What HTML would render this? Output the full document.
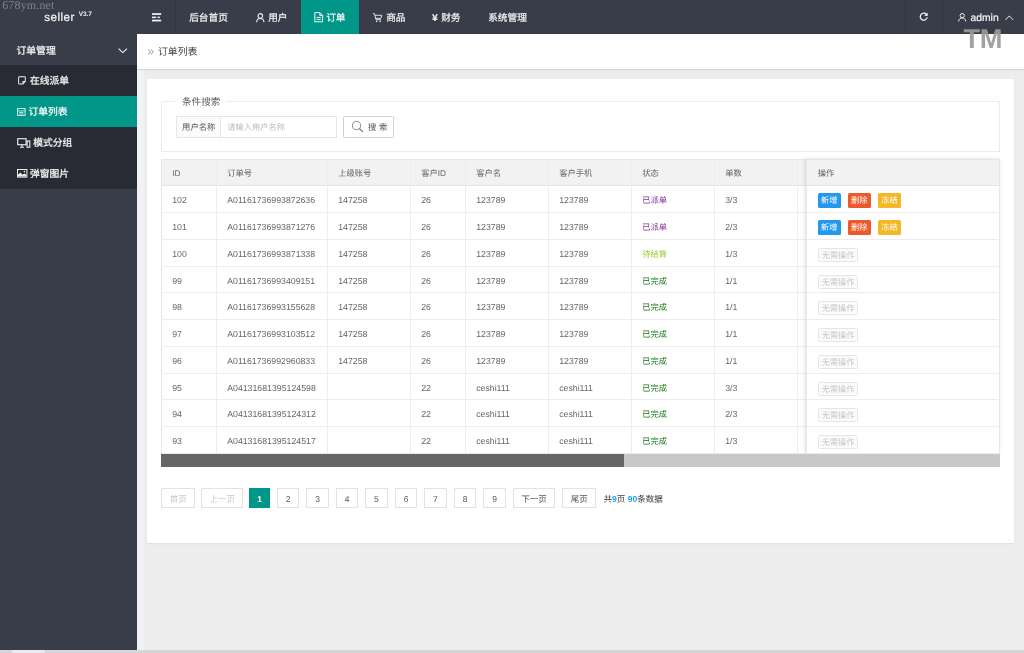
<!DOCTYPE html>
<html lang="zh-CN">
<head>
<meta charset="utf-8">
<title>seller</title>
<style>
*{box-sizing:border-box;margin:0;padding:0}
html,body{width:1024px;height:653px;overflow:hidden}
body{will-change:transform;text-rendering:geometricPrecision}
body{position:relative;background:#ededed;font-family:"Liberation Sans",sans-serif;font-size:9.6px;color:#666}
.abs{position:absolute}
.nw{white-space:nowrap;overflow:visible}
svg{position:absolute;overflow:visible}
/* header */
#hd{left:0;top:0;width:1024px;height:34px;background:#393d49}
#hd .t{-webkit-text-stroke:0.22px #f1f1f2;position:absolute;top:1.5px;height:34px;line-height:34.5px;color:#f1f1f2;font-size:9.7px;white-space:nowrap}
#hd .dv{position:absolute;top:0;width:1px;height:34px;background:#31343f}
/* side */
#sd{left:0;top:34px;width:137px;height:619px;background:#393d49}
#sd .it{-webkit-text-stroke:0.25px #f4f4f5;position:absolute;left:0;width:137px;height:31px;line-height:35.2px;color:#f4f4f5;font-size:9.8px;white-space:nowrap}
#sub .it{line-height:34px;font-size:9.75px}
#sub{left:0;top:31px;width:137px;height:123.5px;background:#282b33}
/* crumbs */
#bc{left:137px;top:34px;width:887px;height:34.5px;background:#fff;box-shadow:0 1px 1.5px rgba(0,0,0,.12)}
/* card */
#cd{left:147px;top:79px;width:867px;height:464px;background:#fff;box-shadow:0 1px 1.5px rgba(0,0,0,.07)}

.th{font-size:8.3px;color:#666}
.td{font-size:8.75px;color:#666;line-height:28.9px}
.sp{color:#7d3596;font-size:8.3px}
.sy{color:#9acd32;font-size:8.3px}
.sg{color:#167516;font-size:8.3px}
.bt{height:15.2px;width:22.8px;border-radius:1.5px;color:#fff;font-size:8.2px;line-height:15.4px;text-align:center}
.bd{height:14.2px;width:40.6px;border-radius:1.5px;border:1px solid #e6e6e6;background:#fbfbfb;color:#c6c6c6;font-size:8.2px;line-height:13.6px;text-align:center}
.pg{top:488.4px;height:20px;border:1px solid #e2e2e2;background:#fff;color:#555;font-size:8.5px;line-height:20.2px;text-align:center}
.pg.dis{color:#c8c8c8}
.pg.cur{background:#009688;border-color:#009688;color:#fff;font-weight:bold}
.bl{color:#1e9fff}
</style>
</head>
<body>
<!-- header -->
<div id="hd" class="abs">
  <div class="dv" style="left:175px"></div>
  <div class="dv" style="left:905px"></div>
  <div class="dv" style="left:942px"></div>
  <div class="abs" style="left:301px;top:0;width:58.3px;height:34px;background:#009688"></div>
  <div class="t" style="left:189.2px">后台首页</div>
  <div class="t" style="left:268.2px">用户</div>
  <div class="t" style="left:326.2px;color:#fff">订单</div>
  <div class="t" style="left:386.2px">商品</div>
  <div class="t" style="left:432.3px;font-weight:bold;font-size:9.6px">¥</div>
  <div class="t" style="left:441.2px">财务</div>
  <div class="t" style="left:488.2px">系统管理</div>
  <div class="t" style="left:970.6px;font-size:10.3px">admin</div>
</div>
<!-- sidebar -->
<div id="sd" class="abs">
  <div class="it" style="top:0;left:0;padding-left:16.5px">订单管理</div>
  <div id="sub" class="abs">
    <div class="it" style="top:0;padding-left:30px">在线派单</div>
    <div class="it" style="top:31px;background:#009688;color:#fff;padding-left:28.5px">订单列表</div>
    <div class="it" style="top:62px;padding-left:33.3px">模式分组</div>
    <div class="it" style="top:93px;padding-left:30px">弹窗图片</div>
  </div>
</div>
<!-- logo -->
<div class="abs nw" style="left:44.3px;top:10.8px;font-size:11.7px;line-height:14px;color:#f5f5f5;letter-spacing:0.42px;-webkit-text-stroke:0.2px #f5f5f5">seller</div>
<div class="abs nw" style="left:78.8px;top:10.8px;font-size:6.5px;line-height:8px;font-weight:bold;color:#f0f0f0;letter-spacing:-0.1px">V3.7</div>
<div class="abs nw" style="left:2.2px;top:-1.2px;font-family:'Liberation Serif',serif;font-size:12px;line-height:13px;color:#80828b;letter-spacing:0.15px">678ym.net</div>
<div class="abs" style="left:137px;top:69px;width:7px;height:581px;background:#f2f2f4"></div>
<!-- breadcrumb -->
<div id="bc" class="abs">
  <div class="abs nw" style="left:10.5px;top:0;line-height:35.6px;font-size:12px;color:#a3a3a3">»</div>
  <div class="abs nw" style="left:21px;top:0;line-height:37.4px;font-size:9.85px;color:#444">订单列表</div>
</div>
<div class="abs nw" style="left:963.5px;top:22.8px;font-size:27.3px;line-height:31px;font-weight:bold;color:#9b9b9b;opacity:.92;letter-spacing:-0.5px">TM</div>
<!--ICONS-->
<!-- hamburger -->
<svg style="left:151.8px;top:12.6px" width="10" height="9" viewBox="0 0 10 9"><g fill="#f4f4f4"><rect x="0" y="0.2" width="9.2" height="1.7"/><rect x="0" y="3.6" width="4.2" height="1.5"/><rect x="5.6" y="3.6" width="2.2" height="1.5"/><rect x="0" y="6.7" width="9.2" height="1.7"/></g></svg>
<!-- user (nav) -->
<svg style="left:255.8px;top:12.6px" width="9" height="10" viewBox="0 0 9 10"><g fill="none" stroke="#f1f1f1" stroke-width="1.05"><circle cx="4.3" cy="2.9" r="2.3"/><path d="M0.6 9.2C0.8 6.6 2.4 5.5 4.3 5.5S7.8 6.6 8 9.2"/></g></svg>
<!-- order doc -->
<svg style="left:313.8px;top:11.8px" width="10" height="11" viewBox="0 0 10 11"><g fill="none" stroke="#fff" stroke-width="0.95" stroke-linejoin="round"><path d="M0.8 0.6H5.8L8.6 3.4V9.8H0.8Z"/><path d="M5.8 0.6V3.4H8.6"/><path d="M2.6 5.4H6.8M2.6 7.4H6.8" stroke-width="0.9"/></g></svg>
<!-- cart -->
<svg style="left:372.7px;top:12.5px" width="10.2" height="9.6" viewBox="0 0 11 10" preserveAspectRatio="none"><g fill="none" stroke="#f1f1f1" stroke-width="0.95" stroke-linejoin="round" stroke-linecap="round"><path d="M0.4 0.6L1.6 0.8L3.3 7H8.2"/><path d="M2.3 2.4H9.6L8.5 5.6H3"/></g><circle cx="3.9" cy="8.7" r="0.85" fill="#f1f1f1"/><circle cx="7.7" cy="8.7" r="0.85" fill="#f1f1f1"/></svg>
<!-- refresh -->
<svg style="left:919.3px;top:12.3px" width="9.4" height="9.4" viewBox="0 0 10 10"><path d="M7.9 2.6A3.7 3.7 0 1 0 8.7 5.6" fill="none" stroke="#f4f4f4" stroke-width="1.35"/><path d="M5.6 3.9L9.2 0.5V4.2Z" fill="#f4f4f4"/></svg>
<!-- user (right) -->
<svg style="left:958px;top:12.9px" width="9" height="9" viewBox="0 0 9 9"><g fill="none" stroke="#f1f1f1" stroke-width="1"><circle cx="4.2" cy="2.6" r="2.1"/><path d="M0.6 8.4C0.8 6 2.4 5 4.2 5S7.6 6 7.8 8.4"/></g></svg>
<!-- caret up -->
<svg style="left:1004.8px;top:14.6px" width="9" height="6" viewBox="0 0 9 6"><path d="M0.5 4.9L4.3 0.9L8.1 4.9" fill="none" stroke="#f1f1f1" stroke-width="1"/></svg>
<!-- chevron down -->
<svg style="left:117.5px;top:48px" width="10" height="6" viewBox="0 0 10 6"><path d="M0.6 0.6L4.8 4.6L9 0.6" fill="none" stroke="#f4f4f4" stroke-width="1.05"/></svg>
<!-- note -->
<svg style="left:17.7px;top:76.4px" width="8.3" height="8.7" viewBox="0 0 9 9" preserveAspectRatio="none"><path d="M5.4 8.3H1.6Q0.7 8.3 0.7 7.4V1.6Q0.7 0.7 1.6 0.7H7Q7.9 0.7 7.9 1.6V5.6L5.4 8.3V5.6H7.9" fill="none" stroke="#f1f1f1" stroke-width="1.05" stroke-linejoin="round"/></svg>
<!-- list -->
<svg style="left:16.8px;top:107.8px" width="8.8" height="8.2" viewBox="0 0 9 9" preserveAspectRatio="none"><g fill="none" stroke="#eafffb" stroke-width="0.9"><rect x="0.6" y="0.6" width="7.7" height="7.5"/><path d="M0.6 3.2H8.3M2.2 5H6.6M2.2 6.6H6.6" stroke-width="0.8"/></g></svg>
<!-- devices -->
<svg style="left:16.8px;top:137.6px" width="14" height="10" viewBox="0 0 14 10"><g fill="none" stroke="#f1f1f1" stroke-width="1.1"><rect x="0.7" y="0.7" width="8.4" height="6"/><path d="M3 9.2H7M5 6.8V9.2" /><rect x="10.1" y="3" width="2.7" height="6.2" fill="#282b33"/></g></svg>
<!-- image -->
<svg style="left:16.9px;top:169.4px" width="11" height="9" viewBox="0 0 11 9"><rect x="0.5" y="0.5" width="9.4" height="7.6" fill="none" stroke="#f1f1f1" stroke-width="1"/><path d="M1 7.6V5.8L3.4 3.6L5.6 5.8L7.4 4.6L9.4 6V7.6Z" fill="#f1f1f1"/><circle cx="7.4" cy="2.6" r="0.8" fill="#f1f1f1"/></svg>
<!--/ICONS-->
<!-- card -->
<div id="cd" class="abs"></div>
<!--CONTENT-->
<div class="abs" style="left:161px;top:101px;width:839px;height:51px;border:1px solid #ececec"></div>
<div class="abs nw" style="left:176px;top:94px;width:50px;height:14px;background:#fff;padding-left:6px;line-height:17.4px;font-size:9.6px;color:#5c5c5c">条件搜索</div>
<div class="abs nw" style="left:175.5px;top:116.3px;width:45.5px;height:21.4px;border:1px solid #e6e6e6;background:#fbfbfb;line-height:21.6px;font-size:8.3px;color:#555;padding-left:5.6px">用户名称</div>
<div class="abs nw" style="left:220px;top:116.3px;width:116.5px;height:21.4px;border:1px solid #e6e6e6;background:#fff;line-height:22.2px;font-size:8.25px;color:#bdbdbd;padding-left:6.2px">请输入用户名称</div>
<div class="abs nw" style="left:343px;top:116.3px;width:51px;height:21.4px;border:1px solid #d0d0d0;border-radius:1.5px;background:#fff;line-height:21.6px;font-size:8.3px;color:#555;padding-left:24px;letter-spacing:0.2px">搜 索</div>
<svg style="left:351.5px;top:121px" width="12" height="12" viewBox="0 0 12 12"><circle cx="4.5" cy="4.6" r="4.1" fill="none" stroke="#777" stroke-width="0.85"/><path d="M7.4 7.4L10.6 10.6" stroke="#777" stroke-width="1.2" stroke-linecap="round"/></svg>
<div class="abs" style="left:161px;top:159px;width:839.0px;height:295px;background:#fff;border:1px solid #e6e6e6;border-bottom:none"></div>
<div class="abs" style="left:161px;top:159px;width:839.0px;height:27px;background:#f2f2f2;border:1px solid #e6e6e6"></div>
<div class="abs" style="left:161px;top:212px;width:839.0px;height:1px;background:#ededed"></div>
<div class="abs" style="left:161px;top:239px;width:839.0px;height:1px;background:#ededed"></div>
<div class="abs" style="left:161px;top:266px;width:839.0px;height:1px;background:#ededed"></div>
<div class="abs" style="left:161px;top:292px;width:839.0px;height:1px;background:#ededed"></div>
<div class="abs" style="left:161px;top:319px;width:839.0px;height:1px;background:#ededed"></div>
<div class="abs" style="left:161px;top:346px;width:839.0px;height:1px;background:#ededed"></div>
<div class="abs" style="left:161px;top:373px;width:839.0px;height:1px;background:#ededed"></div>
<div class="abs" style="left:161px;top:399px;width:839.0px;height:1px;background:#ededed"></div>
<div class="abs" style="left:161px;top:426px;width:839.0px;height:1px;background:#ededed"></div>
<div class="abs" style="left:161px;top:453px;width:839.0px;height:1px;background:#ededed"></div>
<div class="abs" style="left:216px;top:159px;width:1px;height:295px;background:#ededed"></div>
<div class="abs" style="left:327px;top:159px;width:1px;height:295px;background:#ededed"></div>
<div class="abs" style="left:410px;top:159px;width:1px;height:295px;background:#ededed"></div>
<div class="abs" style="left:465px;top:159px;width:1px;height:295px;background:#ededed"></div>
<div class="abs" style="left:548px;top:159px;width:1px;height:295px;background:#ededed"></div>
<div class="abs" style="left:631px;top:159px;width:1px;height:295px;background:#ededed"></div>
<div class="abs" style="left:714px;top:159px;width:1px;height:295px;background:#ededed"></div>
<div class="abs" style="left:797px;top:159px;width:1px;height:295px;background:#ededed"></div>
<div class="abs nw th" style="left:172.2px;top:159px;line-height:28px">ID</div>
<div class="abs nw th" style="left:227.2px;top:159px;line-height:28px">订单号</div>
<div class="abs nw th" style="left:338.2px;top:159px;line-height:28px">上级账号</div>
<div class="abs nw th" style="left:421.2px;top:159px;line-height:28px">客户ID</div>
<div class="abs nw th" style="left:476.2px;top:159px;line-height:28px">客户名</div>
<div class="abs nw th" style="left:559.2px;top:159px;line-height:28px">客户手机</div>
<div class="abs nw th" style="left:642.2px;top:159px;line-height:28px">状态</div>
<div class="abs nw th" style="left:725.2px;top:159px;line-height:28px">单数</div>
<div class="abs nw td" style="left:172.2px;top:186.00px">102</div>
<div class="abs nw td" style="left:227.2px;top:186.00px">A01161736993872636</div>
<div class="abs nw td" style="left:338.2px;top:186.00px">147258</div>
<div class="abs nw td" style="left:421.2px;top:186.00px">26</div>
<div class="abs nw td" style="left:476.2px;top:186.00px">123789</div>
<div class="abs nw td" style="left:559.2px;top:186.00px">123789</div>
<div class="abs nw td sp" style="left:642.2px;top:186.00px">已派单</div>
<div class="abs nw td" style="left:725.2px;top:186.00px">3/3</div>
<div class="abs nw td" style="left:172.2px;top:213.00px">101</div>
<div class="abs nw td" style="left:227.2px;top:213.00px">A01161736993871276</div>
<div class="abs nw td" style="left:338.2px;top:213.00px">147258</div>
<div class="abs nw td" style="left:421.2px;top:213.00px">26</div>
<div class="abs nw td" style="left:476.2px;top:213.00px">123789</div>
<div class="abs nw td" style="left:559.2px;top:213.00px">123789</div>
<div class="abs nw td sp" style="left:642.2px;top:213.00px">已派单</div>
<div class="abs nw td" style="left:725.2px;top:213.00px">2/3</div>
<div class="abs nw td" style="left:172.2px;top:240.00px">100</div>
<div class="abs nw td" style="left:227.2px;top:240.00px">A01161736993871338</div>
<div class="abs nw td" style="left:338.2px;top:240.00px">147258</div>
<div class="abs nw td" style="left:421.2px;top:240.00px">26</div>
<div class="abs nw td" style="left:476.2px;top:240.00px">123789</div>
<div class="abs nw td" style="left:559.2px;top:240.00px">123789</div>
<div class="abs nw td sy" style="left:642.2px;top:240.00px">待结算</div>
<div class="abs nw td" style="left:725.2px;top:240.00px">1/3</div>
<div class="abs nw td" style="left:172.2px;top:267.00px">99</div>
<div class="abs nw td" style="left:227.2px;top:267.00px">A01161736993409151</div>
<div class="abs nw td" style="left:338.2px;top:267.00px">147258</div>
<div class="abs nw td" style="left:421.2px;top:267.00px">26</div>
<div class="abs nw td" style="left:476.2px;top:267.00px">123789</div>
<div class="abs nw td" style="left:559.2px;top:267.00px">123789</div>
<div class="abs nw td sg" style="left:642.2px;top:267.00px">已完成</div>
<div class="abs nw td" style="left:725.2px;top:267.00px">1/1</div>
<div class="abs nw td" style="left:172.2px;top:293.00px">98</div>
<div class="abs nw td" style="left:227.2px;top:293.00px">A01161736993155628</div>
<div class="abs nw td" style="left:338.2px;top:293.00px">147258</div>
<div class="abs nw td" style="left:421.2px;top:293.00px">26</div>
<div class="abs nw td" style="left:476.2px;top:293.00px">123789</div>
<div class="abs nw td" style="left:559.2px;top:293.00px">123789</div>
<div class="abs nw td sg" style="left:642.2px;top:293.00px">已完成</div>
<div class="abs nw td" style="left:725.2px;top:293.00px">1/1</div>
<div class="abs nw td" style="left:172.2px;top:320.00px">97</div>
<div class="abs nw td" style="left:227.2px;top:320.00px">A01161736993103512</div>
<div class="abs nw td" style="left:338.2px;top:320.00px">147258</div>
<div class="abs nw td" style="left:421.2px;top:320.00px">26</div>
<div class="abs nw td" style="left:476.2px;top:320.00px">123789</div>
<div class="abs nw td" style="left:559.2px;top:320.00px">123789</div>
<div class="abs nw td sg" style="left:642.2px;top:320.00px">已完成</div>
<div class="abs nw td" style="left:725.2px;top:320.00px">1/1</div>
<div class="abs nw td" style="left:172.2px;top:347.00px">96</div>
<div class="abs nw td" style="left:227.2px;top:347.00px">A01161736992960833</div>
<div class="abs nw td" style="left:338.2px;top:347.00px">147258</div>
<div class="abs nw td" style="left:421.2px;top:347.00px">26</div>
<div class="abs nw td" style="left:476.2px;top:347.00px">123789</div>
<div class="abs nw td" style="left:559.2px;top:347.00px">123789</div>
<div class="abs nw td sg" style="left:642.2px;top:347.00px">已完成</div>
<div class="abs nw td" style="left:725.2px;top:347.00px">1/1</div>
<div class="abs nw td" style="left:172.2px;top:374.00px">95</div>
<div class="abs nw td" style="left:227.2px;top:374.00px">A04131681395124598</div>
<div class="abs nw td" style="left:421.2px;top:374.00px">22</div>
<div class="abs nw td" style="left:476.2px;top:374.00px">ceshi111</div>
<div class="abs nw td" style="left:559.2px;top:374.00px">ceshi111</div>
<div class="abs nw td sg" style="left:642.2px;top:374.00px">已完成</div>
<div class="abs nw td" style="left:725.2px;top:374.00px">3/3</div>
<div class="abs nw td" style="left:172.2px;top:400.00px">94</div>
<div class="abs nw td" style="left:227.2px;top:400.00px">A04131681395124312</div>
<div class="abs nw td" style="left:421.2px;top:400.00px">22</div>
<div class="abs nw td" style="left:476.2px;top:400.00px">ceshi111</div>
<div class="abs nw td" style="left:559.2px;top:400.00px">ceshi111</div>
<div class="abs nw td sg" style="left:642.2px;top:400.00px">已完成</div>
<div class="abs nw td" style="left:725.2px;top:400.00px">2/3</div>
<div class="abs nw td" style="left:172.2px;top:427.00px">93</div>
<div class="abs nw td" style="left:227.2px;top:427.00px">A04131681395124517</div>
<div class="abs nw td" style="left:421.2px;top:427.00px">22</div>
<div class="abs nw td" style="left:476.2px;top:427.00px">ceshi111</div>
<div class="abs nw td" style="left:559.2px;top:427.00px">ceshi111</div>
<div class="abs nw td sg" style="left:642.2px;top:427.00px">已完成</div>
<div class="abs nw td" style="left:725.2px;top:427.00px">1/3</div>
<div class="abs" style="left:806px;top:159px;width:194.0px;height:295px;background:#fff;border-left:1px solid #e6e6e6;border-right:1px solid #e6e6e6;box-shadow:-1.5px 0 4px rgba(0,0,0,.13)"></div>
<div class="abs" style="left:806px;top:159px;width:194.0px;height:27px;background:#f2f2f2;border:1px solid #e6e6e6"></div>
<div class="abs" style="left:806px;top:212px;width:194.0px;height:1px;background:#ededed"></div>
<div class="abs" style="left:806px;top:239px;width:194.0px;height:1px;background:#ededed"></div>
<div class="abs" style="left:806px;top:266px;width:194.0px;height:1px;background:#ededed"></div>
<div class="abs" style="left:806px;top:292px;width:194.0px;height:1px;background:#ededed"></div>
<div class="abs" style="left:806px;top:319px;width:194.0px;height:1px;background:#ededed"></div>
<div class="abs" style="left:806px;top:346px;width:194.0px;height:1px;background:#ededed"></div>
<div class="abs" style="left:806px;top:373px;width:194.0px;height:1px;background:#ededed"></div>
<div class="abs" style="left:806px;top:399px;width:194.0px;height:1px;background:#ededed"></div>
<div class="abs" style="left:806px;top:426px;width:194.0px;height:1px;background:#ededed"></div>
<div class="abs" style="left:806px;top:453px;width:194.0px;height:1px;background:#ededed"></div>
<div class="abs nw th" style="left:817.8px;top:159px;line-height:28px">操作</div>
<div class="abs nw bt" style="left:817.8px;top:192.60px;background:#2399ee">新增</div>
<div class="abs nw bt" style="left:847.8px;top:192.60px;background:#ee592b">删除</div>
<div class="abs nw bt" style="left:878px;top:192.60px;background:#f4b725">冻结</div>
<div class="abs nw bt" style="left:817.8px;top:219.60px;background:#2399ee">新增</div>
<div class="abs nw bt" style="left:847.8px;top:219.60px;background:#ee592b">删除</div>
<div class="abs nw bt" style="left:878px;top:219.60px;background:#f4b725">冻结</div>
<div class="abs nw bd" style="left:817.8px;top:248.00px">无需操作</div>
<div class="abs nw bd" style="left:817.8px;top:275.00px">无需操作</div>
<div class="abs nw bd" style="left:817.8px;top:301.00px">无需操作</div>
<div class="abs nw bd" style="left:817.8px;top:328.00px">无需操作</div>
<div class="abs nw bd" style="left:817.8px;top:355.00px">无需操作</div>
<div class="abs nw bd" style="left:817.8px;top:382.00px">无需操作</div>
<div class="abs nw bd" style="left:817.8px;top:408.00px">无需操作</div>
<div class="abs nw bd" style="left:817.8px;top:435.00px">无需操作</div>
<div class="abs" style="left:161px;top:454.00px;width:839.0px;height:13px;background:#c8c8c8"></div>
<div class="abs" style="left:161px;top:454.00px;width:463.4px;height:13px;background:#666"></div>
<div class="abs nw pg dis" style="left:161.3px;width:34.0px">首页</div>
<div class="abs nw pg dis" style="left:201.3px;width:42.0px">上一页</div>
<div class="abs nw pg cur" style="left:248.8px;width:21.4px">1</div>
<div class="abs nw pg" style="left:277px;width:22.4px">2</div>
<div class="abs nw pg" style="left:306.3px;width:22.4px">3</div>
<div class="abs nw pg" style="left:335.8px;width:22.6px">4</div>
<div class="abs nw pg" style="left:365px;width:22.6px">5</div>
<div class="abs nw pg" style="left:395px;width:22.4px">6</div>
<div class="abs nw pg" style="left:424.4px;width:22.2px">7</div>
<div class="abs nw pg" style="left:454px;width:22.3px">8</div>
<div class="abs nw pg" style="left:483.4px;width:22.5px">9</div>
<div class="abs nw pg" style="left:512.8px;width:42.2px">下一页</div>
<div class="abs nw pg" style="left:562.2px;width:34.0px">尾页</div>
<div class="abs nw" style="left:603.4px;top:488.4px;line-height:23.2px;font-size:8.55px;color:#3a3a3a">共<b class="bl">9</b>页 <b class="bl">90</b>条数据</div>
<!--/CONTENT-->
<!-- bottom strip -->
<div class="abs" style="left:0;top:650px;width:1024px;height:3px;background:#d6d6d8"></div>
<div class="abs" style="left:12px;top:650px;width:33px;height:3px;background:#e9e9ee"></div>
</body>
</html>
